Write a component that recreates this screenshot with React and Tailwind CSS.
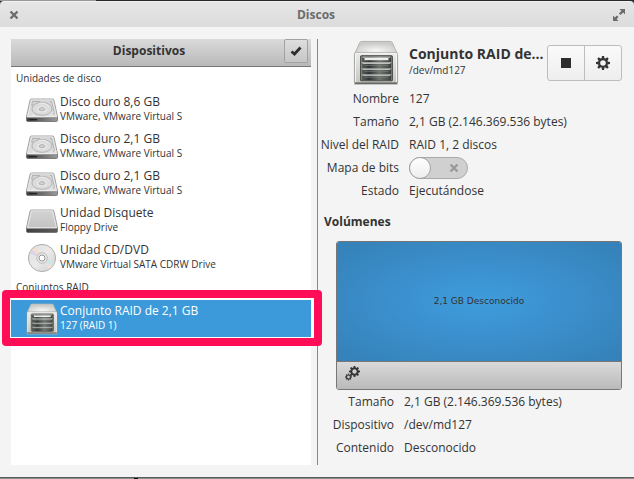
import React, { useId, useState } from "react";

const HardDiskIcon = ({ plain }) => {
  const id = useId();
  return (
    <svg viewBox="0 0 32 24" className="h-6 w-8 shrink-0" aria-hidden="true">
      <defs>
        <linearGradient id={`${id}top`} x1="0" y1="0" x2="0" y2="1">
          <stop offset="0" stopColor="#d4d4d4" />
          <stop offset="1" stopColor={plain ? "#c2c2c2" : "#dedede"} />
        </linearGradient>
        <linearGradient id={`${id}side`} x1="0" y1="0" x2="1" y2="0">
          <stop offset="0" stopColor="#404040" />
          <stop offset="1" stopColor={plain ? "#5c5c5c" : "#9a9a9a"} />
        </linearGradient>
      </defs>
      <path d="M.5 18.500h31v3.800c0 .7-.4 1.200-1.200 1.200H1.700C.9 23.500.5 23 .5 22.300z" fill={`url(#${id}side)`} stroke="#6b6b6b" strokeWidth=".8" />
      <path d="M5.500 1h21c.8 0 1.200.4 1.400 1.100L31.500 18.500c.1.700-.3 1-1 1h-29c-.7 0-1.100-.3-1-1L4.100 2.100C4.300 1.400 4.700 1 5.500 1z" fill={`url(#${id}top)`} stroke="#8e8e8e" strokeWidth=".8" />
      <path d="M5.500 1.800h21L30.400 18.600H1.600z" fill="none" stroke="#f2f2f2" strokeWidth=".7" />
      {!plain && (
        <g fill="none" stroke="#a3a3a3" strokeWidth=".7">
          <path d="M6.500 3.500h7.200l-1.500 2.200-4 1.400-2.500.1zM24 3.500h1.500l3 11.500c0 1-.8 1.500-2 1.800" />
          <ellipse cx="16" cy="10.800" rx="10" ry="6.500" fill="#dcdcdc" />
          <ellipse cx="16" cy="11.300" rx="4" ry="2.300" stroke="#f4f4f4" strokeWidth="1.200" />
          <ellipse cx="16" cy="11.300" rx="3.200" ry="1.700" fill="#cfcfcf" />
          <path d="M13 5.500c4-1 8 0 9.500 3M6 17l3 .5M24 17.300l3-.5" stroke="#f6f6f6" />
        </g>
      )}
      {!plain && <path d="M3 21h8v1.300H3z" fill="#222" />}
    </svg>
  );
};

const DiscIcon = () => {
  const id = useId();
  return (
    <svg viewBox="0 0 32 30" className="h-[30px] w-8 shrink-0" aria-hidden="true">
      <defs>
        <linearGradient id={id} x1="0" y1="0" x2="1" y2="1">
          <stop offset="0" stopColor="#dedede" />
          <stop offset=".5" stopColor="#eaeaea" />
          <stop offset="1" stopColor="#cfcfcf" />
        </linearGradient>
      </defs>
      <circle cx="16" cy="15" r="13.600" fill={`url(#${id})`} stroke="#a5a5a5" strokeWidth=".9" />
      <path d="M16 15 3.500 10.500 6 6.500z" fill="#d9d4ea" />
      <path d="M16 15 6 6.500l3-2.500z" fill="#f4dcc8" />
      <path d="m16 15 12.500 4-2.500 5z" fill="#cfe6e4" />
      <path d="m16 15 10 9-3.500 2.300z" fill="#f3ddd9" />
      <circle cx="16" cy="15" r="5.300" fill="#e8e8e8" stroke="#b5b5b5" strokeWidth=".8" />
      <circle cx="16" cy="15" r="3" fill="#fff" stroke="#999999" strokeWidth="1" />
    </svg>
  );
};

const RaidIcon = ({ className }) => {
  const id = useId();
  return (
    <svg viewBox="0 0 48 48" className={className} aria-hidden="true">
      <defs>
        <radialGradient id={`${id}roof`} cx=".5" cy=".75" r=".6">
          <stop offset="0" stopColor="#f6f6f5" />
          <stop offset="1" stopColor="#cbccc9" />
        </radialGradient>
        <linearGradient id={`${id}body`} x1="0" y1="0" x2="0" y2="1">
          <stop offset="0" stopColor="#ececea" />
          <stop offset="1" stopColor="#c4c5c0" />
        </linearGradient>
        <linearGradient id={`${id}bay`} x1="0" y1="0" x2="1" y2="0">
          <stop offset="0" stopColor="#5c605c" />
          <stop offset=".25" stopColor="#2e3436" />
          <stop offset=".6" stopColor="#70746f" />
          <stop offset="1" stopColor="#3c403e" />
        </linearGradient>
      </defs>
      <rect x="1" y="45" width="46" height="2" rx="1" fill="#c8c8c8" />
      <path d="M9 1.500h30c1 0 1.600.4 2 1.300L46 14H2L7 2.800C7.400 1.900 8 1.500 9 1.500z" fill={`url(#${id}roof)`} stroke="#b0b2ad" />
      <rect x="1.500" y="13.500" width="45" height="32" rx="1.500" fill={`url(#${id}body)`} stroke="#979994" />
      <path d="M2.500 44V14h43v30" fill="none" stroke="#fafafa" />
      <path d="M2 45h44" stroke="#555753" strokeWidth="1.300" />
      <rect x="8" y="16.500" width="33" height="26" rx="1" fill="#a9aba6" stroke="#3f423e" strokeWidth="1.200" />
      {[17.5, 24, 30.2, 36.4].map((y, i) => (
        <g key={y}>
          <rect x="9" y={y} width="31" height="5.500" fill={`url(#${id}bay)`} />
          <path d={`M10 ${y + 0.5}h29`} stroke="#d4d6d2" strokeWidth=".9" />
          <path d={`M12 ${y + 2.4}h25`} stroke={i ? "#7d807b" : "#ededeb"} strokeWidth={i ? 0.8 : 2.4} />
        </g>
      ))}
    </svg>
  );
};

const CloseIcon = ({ className }) => (
  <svg viewBox="0 0 10 10" className={className} aria-hidden="true">
    <path d="m1.500 1.500 7 7m0-7-7 7" stroke="currentColor" strokeWidth="2.400" />
  </svg>
);

const MaximizeIcon = () => (
  <svg viewBox="0 0 12 12" className="h-3 w-3" fill="currentColor" aria-hidden="true">
    <path d="M6.500 0H12v5.500l-1.900-1.900L7.600 6.100 5.900 4.400l2.500-2.500zM0 12V6.500l1.900 1.900 2-2 1.700 1.700-2 2L5.500 12z" />
  </svg>
);

const teeth = [0, 45, 90, 135, 180, 225, 270, 315];

const Gear = ({ x = 0, y = 0, r = 7 }) => (
  <g transform={`translate(${x} ${y}) scale(${r / 7})`}>
    <circle r="3.900" fill="none" stroke="currentColor" strokeWidth="2.200" />
    {teeth.map((angle) => (
      <path key={angle} d="M-1.500-4.500-1-7h2l.5 2.500z" fill="currentColor" transform={`rotate(${angle})`} />
    ))}
  </g>
);

const devices = [
  { name: "Disco duro 8,6 GB", detail: "VMware, VMware Virtual S", icon: <HardDiskIcon /> },
  { name: "Disco duro 2,1 GB", detail: "VMware, VMware Virtual S", icon: <HardDiskIcon /> },
  { name: "Disco duro 2,1 GB", detail: "VMware, VMware Virtual S", icon: <HardDiskIcon /> },
  { name: "Unidad Disquete", detail: "Floppy Drive", icon: <HardDiskIcon plain /> },
  { name: "Unidad CD/DVD", detail: "VMware Virtual SATA CDRW Drive", icon: <DiscIcon /> },
];

const DeviceRow = ({ name, detail, icon, selected }) => (
  <button
    type="button"
    className={`flex h-[37px] w-full items-center gap-[2px] pl-[15px] text-left ${
      selected ? "relative bg-[#3d9ada] text-white" : "text-[#333333]"
    }`}
  >
    {icon}
    <span className="flex flex-col pb-[2px] whitespace-nowrap">
      <span className="text-[12px] leading-[14px]">{name}</span>
      <span className="text-[10px] leading-[14px]">{detail}</span>
    </span>
  </button>
);

const DeviceList = () => (
  <section className="flex w-[300px] shrink-0 flex-col bg-white">
    <header className="flex h-7 items-start border-b border-[#777777] bg-linear-to-b from-[#dadada] to-[#b9b9b9] px-[3px]">
      <h2 className="flex-1 text-center text-[12px] leading-6 font-bold">Dispositivos</h2>
      <button
        type="button"
        aria-label="Seleccionar"
        className="flex size-6 items-center justify-center rounded-[2px] border border-[#a2a2a2] bg-linear-to-b from-[#dedede] to-[#c6c6c6]"
      >
        <svg viewBox="0 0 12 10" className="h-[10px] w-3" aria-hidden="true">
          <path d="m1.500 5.500 3 2.500 6-6.500" fill="none" stroke="#2d2d2d" strokeWidth="2.800" />
        </svg>
      </button>
    </header>
    <h3 className="h-6 px-[5px] text-[10px] leading-[22px]">Unidades de disco</h3>
    <ul>
      {devices.map((device, i) => (
        <li key={i}>
          <DeviceRow {...device} />
        </li>
      ))}
    </ul>
    <h3 className="h-6 px-[5px] text-[10px] leading-[22px]">Conjuntos RAID</h3>
    <div className="relative">
      <div className="absolute -top-[10px] -right-[11px] -bottom-[9px] -left-[9px] rounded-[4px] border-8 border-[#ff0d57] bg-white" />
      <DeviceRow
        name="Conjunto RAID de 2,1 GB"
        detail="127 (RAID 1)"
        icon={<RaidIcon className="size-8 shrink-0" />}
        selected
      />
    </div>
  </section>
);

const Term = ({ children }) => (
  <dt className="flex justify-end whitespace-nowrap">{children}</dt>
);

const DeviceDetails = () => {
  const [bitmap, setBitmap] = useState(false);
  return (
    <>
      <header className="flex h-12 items-center gap-[10px]">
        <div className="flex w-[75px] shrink-0 justify-end">
          <RaidIcon className="h-12 w-[46px]" />
        </div>
        <div className="min-w-0 flex-1 pb-1 whitespace-nowrap">
          <h2 className="text-[14px] leading-[18px] font-bold">Conjunto RAID de...</h2>
          <p className="text-[10px] leading-[14px]">/dev/md127</p>
        </div>
        <div className="-ml-[10px] flex h-9 w-[75px] shrink-0 divide-x divide-[#bdbdbd] rounded-[3px] border border-[#bdbdbd] bg-linear-to-b from-[#fafafa] to-[#eeeeee]">
          <button type="button" aria-label="Detener" className="flex flex-1 items-center justify-center">
            <span className="size-[10px] bg-[#2d2d2d]" />
          </button>
          <button type="button" aria-label="Opciones" className="flex flex-1 items-center justify-center">
            <svg viewBox="-7 -7 14 14" className="size-[14px]" aria-hidden="true">
              <Gear />
            </svg>
          </button>
        </div>
      </header>
      <dl className="grid auto-rows-[23px] grid-cols-[75px_1fr] gap-x-[10px] text-[12px] leading-[23px]">
        <Term>Nombre</Term>
        <dd>127</dd>
        <Term>Tamaño</Term>
        <dd>2,1 GB (2.146.369.536 bytes)</dd>
        <Term>Nivel del RAID</Term>
        <dd>RAID 1, 2 discos</dd>
        <Term>
          <label htmlFor="bitmap">Mapa de bits</label>
        </Term>
        <dd className="relative flex w-[59px] items-center">
          <input
            id="bitmap"
            type="checkbox"
            role="switch"
            checked={bitmap}
            onChange={(e) => setBitmap(e.target.checked)}
            className="flex h-[22px] w-[59px] appearance-none rounded-full border border-[#a9a9a9] bg-[#d0d0d0] before:-m-px before:size-[22px] before:rounded-full before:border before:border-[#a3a3a3] before:bg-linear-to-b before:from-white before:to-[#ededed] checked:justify-end checked:bg-[#3d9ada]"
          />
          {!bitmap && <CloseIcon className="pointer-events-none absolute right-[9px] size-[10px] text-[#999999]" />}
        </dd>
        <Term>Estado</Term>
        <dd>Ejecutándose</dd>
      </dl>
    </>
  );
};

const Volumes = () => (
  <section>
    <h3 className="mt-2 text-[12px] leading-6 font-bold">Volúmenes</h3>
    <div className="mt-[7px] ml-3 overflow-hidden rounded-[3px] border border-[#777777]">
      <button
        type="button"
        className="flex h-[120px] w-full items-center justify-center border-b border-[#777777] bg-[radial-gradient(ellipse_at_center,#3f9cdd,#3580b7)] font-['DejaVu_Sans',sans-serif] text-[9px]"
      >
        2,1 GB Desconocido
      </button>
      <div className="h-[27px] bg-linear-to-b from-[#dadada] to-[#bababa] px-2 pt-1">
        <button type="button" aria-label="Opciones del volumen" className="block">
          <svg viewBox="0 0 16 15" className="h-[15px] w-4" aria-hidden="true">
            <Gear x={9.5} y={5.5} r={5.5} />
            <Gear x={3.5} y={11} r={3.5} />
          </svg>
        </button>
      </div>
    </div>
    <dl className="ml-3 grid auto-rows-[23px] grid-cols-[58px_1fr] gap-x-[10px] text-[12px] leading-[23px]">
      <Term>Tamaño</Term>
      <dd>2,1 GB (2.146.369.536 bytes)</dd>
      <Term>Dispositivo</Term>
      <dd>/dev/md127</dd>
      <Term>Contenido</Term>
      <dd>Desconocido</dd>
    </dl>
  </section>
);

const App = () => {
  return (
    <div className="flex min-h-screen flex-col bg-[#2b272c] font-['Open_Sans',sans-serif] text-[#333333]">
      <div className="h-px w-24 bg-[#999999]" />
      <header className="flex h-[26px] items-center rounded-t-[4px] border-t border-[#f2f2f2] bg-linear-to-b from-[#e6e6e6] to-[#dcdcdc] px-[9px] text-[#6c6c6c]">
        <button type="button" aria-label="Cerrar">
          <CloseIcon className="size-[10px]" />
        </button>
        <h1 className="flex-1 text-center text-[12px] leading-6 font-bold">Discos</h1>
        <button type="button" aria-label="Maximizar">
          <MaximizeIcon />
        </button>
      </header>
      <main className="flex flex-1 gap-[6px] bg-[#f4f4f4] py-3 pr-3 pl-[11px]">
        <DeviceList />
        <div className="min-w-0 flex-1 border-l border-[#888888] pl-[6px]">
          <DeviceDetails />
          <Volumes />
        </div>
      </main>
      <footer className="flex h-[2px] border-t border-[#5c5c5c] bg-[#8c8c8c]">
        <div className="ml-[134px] w-1 bg-black" />
      </footer>
    </div>
  );
};

export default App;
